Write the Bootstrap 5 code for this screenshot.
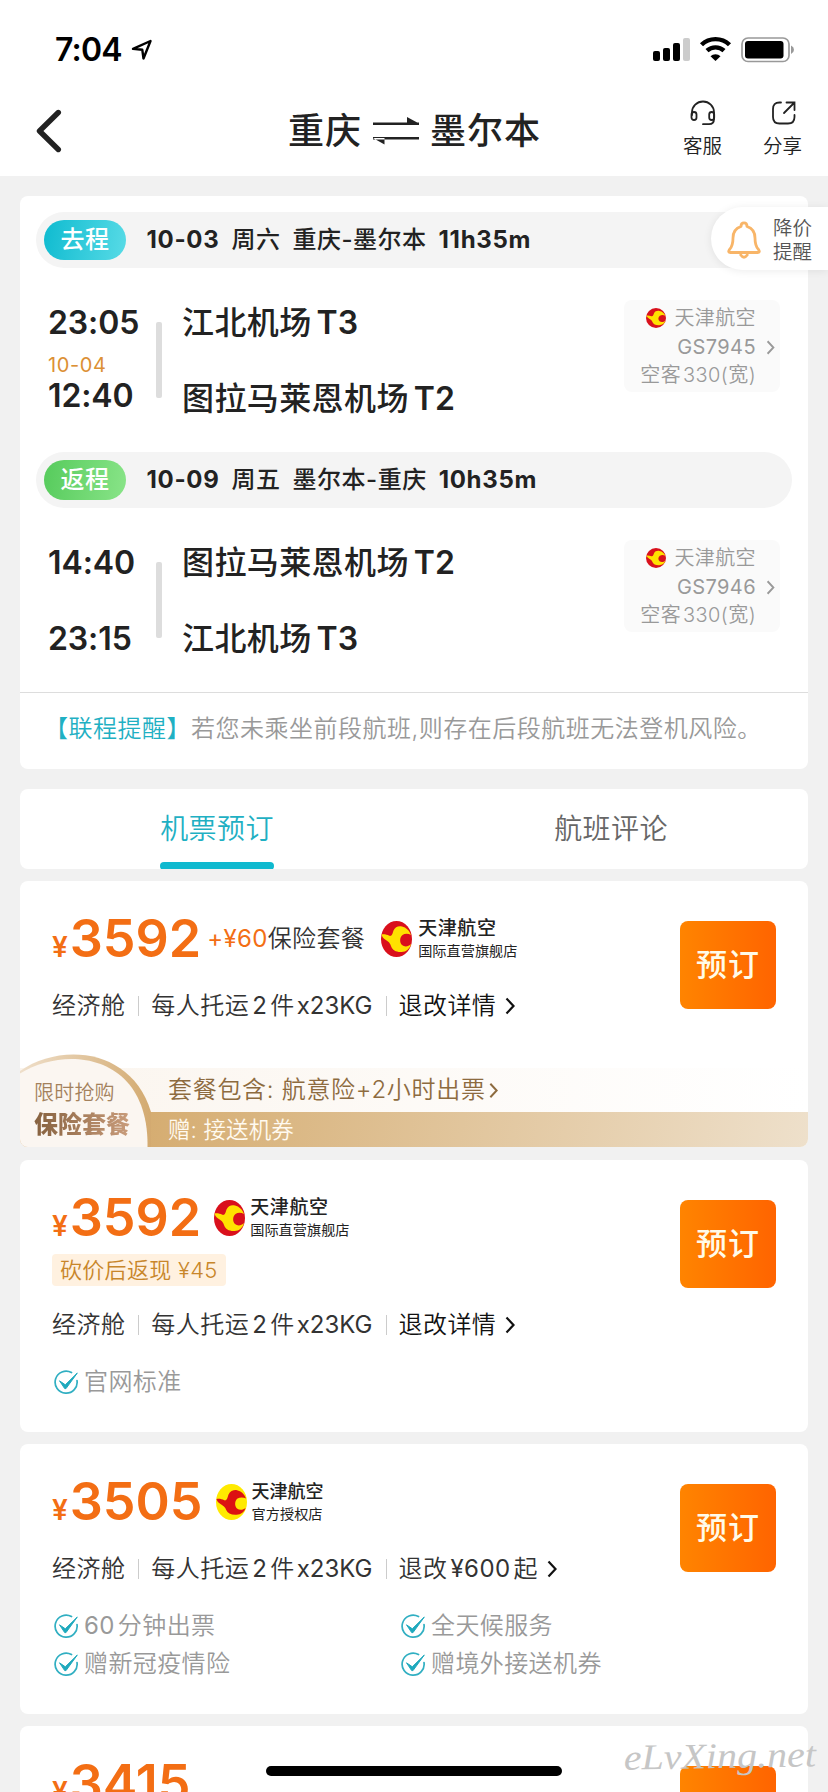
<!DOCTYPE html>
<html lang="zh-CN">
<head>
<meta charset="utf-8">
<meta name="viewport" content="width=device-width, initial-scale=1">
<title>重庆 ⇌ 墨尔本</title>
<link rel="stylesheet" href="https://cdn.jsdelivr.net/npm/bootstrap@5.3.0/dist/css/bootstrap.min.css">
<style>
body{font-family:Inter,"Noto Sans CJK SC",sans-serif;background:#f1f1f1;color:#222;width:828px;height:1792px;overflow:hidden;position:relative;font-size:24px;line-height:32px;white-space:nowrap;font-weight:350}
svg{display:block;flex:none}
.statusbar{height:98px;padding:25px 33px 0 55px}
.clock{font-size:32px;font-weight:600;letter-spacing:-.8px;line-height:50px;color:#000}
.navtop{height:78px;padding:0 26px 0 36px}
.ttl{font-size:36px;font-weight:500;letter-spacing:1px;line-height:50px}
.act{font-size:19.5px;line-height:24px}
.panel{background:#fff;border-radius:8px;margin:0 20px;overflow:hidden}
.triphead{height:56px;border-radius:28px;background:#f4f4f4;margin:0 16px;padding-left:8px;font-weight:700;letter-spacing:.7px}
.triphead>*+*+*{margin-left:12px}
.pill{width:82px;height:40px;border-radius:20px;color:#fff;font-weight:500;text-align:center;line-height:40px;letter-spacing:.4px;margin-right:20.5px}
.pill-go{background:linear-gradient(100deg,#0fbbd0,#58dbe6)}
.pill-back{background:linear-gradient(100deg,#56cb5c,#89e488)}
.triphead .zh{font-weight:500;letter-spacing:.5px}
.tripbody{height:184px;padding:33px 28px 0 28px}
.times{width:108px;font-size:32px;font-weight:600;line-height:44px;letter-spacing:-.1px}
.plus{font-size:20px;line-height:20px;color:#dc9035;font-weight:400;letter-spacing:.6px;margin:10px 0 1px}
.bar{width:6px;height:76px;background:#ddd;border-radius:2px;margin:21px 20px 0 0}
.ports{font-size:32px;font-weight:600;line-height:44px}
.ports span{font-weight:500;letter-spacing:.4px;margin-right:5px}
.gap32{margin-top:32px}
.plane{width:156px;height:92px;border-radius:8px;background:#fafafa;color:#999;font-size:20px;line-height:28.5px;padding:4px 24px 0 0;letter-spacing:.4px;margin-top:-1px;word-spacing:-4px}
.plane .chev{position:absolute;left:142px;top:40px}
.notice{border-top:1px solid #ddd;height:77px;padding-left:24px;line-height:72px;color:#999;letter-spacing:.5px}
.teal{color:#1fb0c3}
.tabs{height:80px;margin-top:20px;font-size:28px;color:#666;line-height:81px;text-align:center;letter-spacing:.4px}
.tabs .on{color:#1fb0c3}
.tabs .on::after{content:"";position:absolute;left:140px;bottom:0;width:114px;height:8px;border-radius:4px;background:#0fb9cf}
.offer{margin-top:12px;position:relative}
.offer .left{padding:32px 0 0 32px}
.price{height:52px;color:#f36e14;font-weight:600}
.yen{font-size:28px;line-height:52px;margin-right:2px}
.num{font-size:52px;line-height:52px;letter-spacing:0}
.extra{letter-spacing:.35px;font-weight:350}
.store{color:#222;font-size:19px;line-height:24px;font-weight:500;padding-top:4px;letter-spacing:.6px}
.store small{display:block;font-size:14.2px;line-height:20px;font-weight:400;letter-spacing:0}
.spec{height:32px;color:#333;letter-spacing:.45px}
.spec i{width:1px;height:20px;background:#ccc;margin:0 12px 0 13px}
.spec b{font-weight:400;margin:0 3px}
.spec .kg{letter-spacing:0;margin:0 0 0 2px}
.dark{color:#111}
.book{flex:none;width:96px;height:88px;border-radius:8px;border:0;background:linear-gradient(90deg,#ff8400,#ff6400);color:#fffbe8;font-size:31px;font-weight:500;padding:0;letter-spacing:1px;margin:40px 32px 0 0;line-height:86px}
.cash{height:32px;width:174px;background:#fff1e0;border-radius:4px;color:#c8862a;font-size:22px;line-height:32px;padding-left:8px;margin-top:10px;letter-spacing:.3px}
.tick{height:38px;color:#999;letter-spacing:.4px}
.tick svg{margin:0 5px 0 2px}
.promo{height:79px;position:relative}
.incl{height:44px;background:linear-gradient(90deg,#fbf5ee,#fff);color:#8d6b3f;padding-left:148px;line-height:44px;letter-spacing:.7px}
.gift{height:35px;background:linear-gradient(100deg,#d5ac70 15%,#eee0cb);color:#fffaf0;padding-left:148px;font-size:22.5px;line-height:35px;letter-spacing:.1px}
.arch{position:absolute;left:0;top:-15px}
.flash{position:absolute;left:14px;top:11px;font-size:20px;line-height:28px;color:#a3815c;letter-spacing:.2px}
.pack{position:absolute;left:14px;top:41px;font-size:24px;line-height:32px;font-weight:900;letter-spacing:0;background:linear-gradient(90deg,#86613f,#c99c7b);-webkit-background-clip:text;background-clip:text;color:transparent}
.float{position:absolute;right:0;top:207px;width:117px;height:63px;border-radius:32px 0 0 32px;background:#fff;box-shadow:0 1px 8px rgba(0,0,0,.08);font-size:19.5px;line-height:24px;color:#555;padding:3px 0 0 16px;gap:12px}
.home{position:absolute;left:266px;top:1766px;width:296px;height:10px;border-radius:5px;background:#000}
.mark-net{position:absolute;left:620px;top:1730px}
</style>
</head>
<body>
<svg width="0" height="0" class="position-absolute">
<defs>
<symbol id="logo" viewBox="0 0 31 36" preserveAspectRatio="none"><ellipse cx="15.500" cy="18" rx="15.500" ry="18" fill="#d9101c"/><path d="M.4 13.500 C3 13 6 13.500 8.300 14.800 C11 15.500 11.500 12.500 12.500 9.500 C14 5.500 18 4.500 21 5.500 C25 6.500 28.500 9.500 30 14 C27.500 12.500 24 12.200 21.500 14 C18.500 16.500 18.500 21.500 21 24 C23.500 26.200 27.500 25.700 30 23 C29 27.500 25 31 20.500 31 C15 31.300 11.500 29 10.200 25.500 C9.300 22 7 20.300 4.500 18.800 C2.500 17.500 1 15.500 .4 13.500Z" fill="#ffe100"/></symbol>
<symbol id="logo2" viewBox="0 0 31 36" preserveAspectRatio="none"><ellipse cx="15.500" cy="18" rx="15.500" ry="18" fill="#ffea00"/><path d="M.4 15 C3 14.500 6 15 8.300 16.300 C11 17 11.500 13.500 12.500 10.500 C14 7 18 5.700 21 6.200 C25 7 28.500 10 30 14.500 C27.500 13 24 13 21.500 14.500 C18.500 17 18.500 22 21 24.500 C23.500 26.500 27 26.200 29.500 24 C28.500 28 25 30.500 20.500 30.700 C15 31 11.500 29 10.200 26 C9.300 23 7 21.500 4.500 20 C2.500 19 1 17 .4 15Z" fill="#dc1212"/></symbol>
<symbol id="check" viewBox="0 0 25 25"><path d="M17.500 2.600 A11 11 0 1 0 23 10.500" fill="none" stroke="#31afc2" stroke-width="1.700" stroke-linecap="round"/><path d="M5.500 10.800 L11.300 14.800 L23.300 3 L12 18.600 L10.700 18.600Z" fill="#1ea9bd" stroke="#1ea9bd" stroke-width="1" stroke-linejoin="round"/></symbol>
<symbol id="gt" viewBox="0 0 10 18"><path d="M1.500 1.500 L8.500 9 L1.500 16.500" fill="none" stroke="currentColor" stroke-width="2.200"/></symbol>
</defs>
</svg>

<header class="bg-white">
  <div class="statusbar d-flex align-items-start">
    <span class="clock">7:04</span>
    <svg width="22" height="22" viewBox="0 0 22 22" style="margin:14px 0 0 9px"><path d="M2 9.800 L19.500 2 L12.500 19.500 L11.300 10.800 Z" fill="none" stroke="#000" stroke-width="2.400" stroke-linejoin="round"/></svg>
    <svg class="ms-auto" width="142" height="28" viewBox="0 0 142 28" style="margin-top:11px">
      <g><rect x="0" y="15" width="7" height="10" rx="2"/><rect x="10" y="12" width="7" height="13" rx="2"/><rect x="20" y="7" width="7" height="18" rx="2"/><rect x="30" y="2" width="7" height="23" rx="2" fill="#ccc"/></g>
      <g fill="none" stroke="#000" stroke-width="4.400"><path d="M48.500 8.800 A20 20 0 0 1 76.500 8.800"/><path d="M54 14.700 A12.500 12.500 0 0 1 71 14.700"/></g><path d="M57.500 20.300 A7 7 0 0 1 67.500 20.300 L62.500 25Z"/>
      <rect x="89" y="2" width="47" height="23.500" rx="6" fill="none" stroke="#999" stroke-width="1.700"/><rect x="92" y="5" width="38.500" height="17.500" rx="3"/><path d="M138 9.500 Q141 11 141 13.700 Q141 16.500 138 18Z" fill="#999"/>
    </svg>
  </div>
  <div class="navtop d-flex align-items-start">
    <svg width="26" height="44" viewBox="0 0 26 44" style="margin-top:11px"><path d="M22.300 3.500 L3.500 22 L22.300 40.500" fill="none" stroke="#222" stroke-width="5.400" stroke-linecap="round" stroke-linejoin="round"/></svg>
    <div class="ttl d-flex" style="margin:8px 0 0 226px"><span>重庆</span>
      <svg width="48" height="28" viewBox="0 0 48 28" style="margin:11px 10px 0 10px"><path d="M1 5.500 H47 V8 H1Z M35 0 L47 6.500 H35Z M1 20 H47 V22.500 H1Z M1 21 L12.500 27.500 V21Z" fill="#222"/></svg>
      <span>墨尔本</span></div>
    <div class="act ms-auto d-flex flex-column align-items-center" style="margin-right:41px">
      <svg width="26" height="26" viewBox="0 0 26 26" style="margin:2px 0 8px 1px"><g fill="none" stroke="#222" stroke-width="1.800" stroke-linecap="round"><path d="M2 15 V12.500 A11 11 0 0 1 24 12.500 V19 Q24 24 19 24.200 H13"/><rect x="1.500" y="12" width="5" height="8" rx="2.500"/><rect x="19.200" y="12" width="5" height="8" rx="2.500"/></g></svg>客服</div>
    <div class="act d-flex flex-column align-items-center">
      <svg width="26" height="26" viewBox="0 0 26 26" style="margin:2px 0 8px 3px"><path d="M10 2.500 H8.500 Q2 2.500 2 9 V17 Q2 23.500 8.500 23.500 H17 Q23.500 23.500 23.500 17 V15 M15.500 2.500 H23.500 V10 M23 3 L13 13" fill="none" stroke="#222" stroke-width="1.800" stroke-linecap="round"/></svg>分享</div>
  </div>
</header>

<section class="panel" style="margin-top:20px;padding-top:16px">
  <div class="triphead d-flex align-items-center"><span class="pill pill-go">去程</span><span class="ms-0">10-03</span><span class="zh">周六</span><span class="zh">重庆-墨尔本</span><span>11h35m</span></div>
  <div class="tripbody d-flex align-items-start">
    <div class="times"><div>23:05</div><div class="plus">10-04</div><div style="line-height:39px">12:40</div></div>
    <div class="bar"></div>
    <div class="ports"><div><span>江北机场</span>T3</div><div class="gap32"><span>图拉马莱恩机场</span>T2</div></div>
    <div class="plane ms-auto text-end position-relative"><div class="d-flex justify-content-end align-items-center"><svg width="20" height="20" style="margin-right:8px"><use href="#logo"/></svg>天津航空</div><div class="fw-normal">GS7945</div><div>空客 330(宽)</div><svg class="chev" width="9" height="15"><use href="#gt"/></svg></div>
  </div>
  <div class="triphead d-flex align-items-center"><span class="pill pill-back">返程</span><span class="ms-0">10-09</span><span class="zh">周五</span><span class="zh">墨尔本-重庆</span><span>10h35m</span></div>
  <div class="tripbody d-flex align-items-start">
    <div class="times"><div>14:40</div><div class="gap32">23:15</div></div>
    <div class="bar"></div>
    <div class="ports"><div><span>图拉马莱恩机场</span>T2</div><div class="gap32"><span>江北机场</span>T3</div></div>
    <div class="plane ms-auto text-end position-relative"><div class="d-flex justify-content-end align-items-center"><svg width="20" height="20" style="margin-right:8px"><use href="#logo"/></svg>天津航空</div><div class="fw-normal">GS7946</div><div>空客 330(宽)</div><svg class="chev" width="9" height="15"><use href="#gt"/></svg></div>
  </div>
  <div class="notice"><span class="teal">【联程提醒】</span>若您未乘坐前段航班,则存在后段航班无法登机风险。</div>
</section>

<nav class="panel tabs row g-0"><div class="col on position-relative">机票预订</div><div class="col">航班评论</div></nav>

<section class="panel offer">
  <div class="d-flex align-items-start" style="height:187px">
    <div class="left">
      <div class="price d-flex"><div><span class="yen">¥</span><span class="num">3592</span></div>
        <div class="extra" style="margin-left:6px;line-height:52px"><span class="fw-normal">+¥60</span><span style="color:#333">保险套餐</span></div>
        <svg width="31" height="36" style="margin:8px 6px 0 16px"><use href="#logo"/></svg>
        <div class="store">天津航空<small>国际直营旗舰店</small></div></div>
      <div class="spec d-flex align-items-center" style="margin-top:25px"><span>经济舱</span><i></i><span>每人托运<b>2</b>件<b class="kg">x23KG</b></span><i></i><span class="dark">退改详情</span><svg width="10" height="18" class="dark" style="margin-left:9px"><use href="#gt"/></svg></div>
    </div>
    <button class="book ms-auto">预订</button>
  </div>
  <div class="promo">
    <div class="incl d-flex align-items-center">套餐包含: 航意险+2小时出票<svg width="9" height="17" style="margin-left:3px"><use href="#gt"/></svg></div>
    <div class="gift">赠: 接送机券</div>
    <svg class="arch" width="136" height="94" viewBox="0 0 136 94"><defs><linearGradient id="gold"><stop offset="0" stop-color="#efdfca"/><stop offset="1" stop-color="#d3aa70"/></linearGradient></defs><path d="M0 18 C42 -11 112 -4 131 59 V94 H0Z" fill="url(#gold)"/><path d="M0 20.500 C48 -9 129 2 127.500 94 H0Z" fill="#fbf6f1"/></svg>
    <span class="flash">限时抢购</span><span class="pack">保险套餐</span>
  </div>
</section>

<section class="panel offer d-flex align-items-start" style="height:272px;margin-top:13px">
  <div class="left">
    <div class="price d-flex"><div><span class="yen">¥</span><span class="num">3592</span></div>
      <svg width="31" height="36" style="margin:8px 5px 0 13px"><use href="#logo"/></svg>
      <div class="store">天津航空<small>国际直营旗舰店</small></div></div>
    <div class="cash">砍价后返现 ¥45</div>
    <div class="spec d-flex align-items-center" style="margin-top:23px"><span>经济舱</span><i></i><span>每人托运<b>2</b>件<b class="kg">x23KG</b></span><i></i><span class="dark">退改详情</span><svg width="10" height="18" class="dark" style="margin-left:9px"><use href="#gt"/></svg></div>
    <div class="tick d-flex align-items-center" style="margin-top:22px"><svg width="25" height="25"><use href="#check"/></svg>官网标准</div>
  </div>
  <button class="book ms-auto">预订</button>
</section>

<section class="panel offer d-flex align-items-start" style="height:270px">
  <div class="left flex-grow-1">
    <div class="price d-flex"><div><span class="yen">¥</span><span class="num">3505</span></div>
      <svg width="31" height="36" style="margin:8px 5px 0 13px"><use href="#logo2"/></svg>
      <div class="store" style="font-size:18px;letter-spacing:0">天津航空<small>官方授权店</small></div></div>
    <div class="spec d-flex align-items-center" style="margin-top:25px"><span>经济舱</span><i></i><span>每人托运<b>2</b>件<b class="kg">x23KG</b></span><i></i><span>退改<b>¥600</b>起</span><svg width="10" height="18" class="dark" style="margin-left:9px"><use href="#gt"/></svg></div>
    <div class="row g-0" style="margin-top:22px">
      <div class="tick d-flex align-items-center" style="width:347px"><svg width="25" height="25"><use href="#check"/></svg><span><span class="fw-normal" style="margin-right:3px">60</span>分钟出票</span></div><div class="tick col d-flex align-items-center"><svg width="25" height="25"><use href="#check"/></svg>全天候服务</div>
      <div class="w-100"></div>
      <div class="tick d-flex align-items-center" style="width:347px"><svg width="25" height="25"><use href="#check"/></svg>赠新冠疫情险</div><div class="tick col d-flex align-items-center"><svg width="25" height="25"><use href="#check"/></svg>赠境外接送机券</div>
    </div>
  </div>
  <button class="book">预订</button>
</section>

<section class="panel offer d-flex align-items-start" style="height:66px;border-bottom-left-radius:0;border-bottom-right-radius:0">
  <div class="left"><div class="price"><span class="yen">¥</span><span class="num">3415</span></div></div>
  <div class="book ms-auto"></div>
</section>

<div class="float d-flex align-items-center">
  <svg width="34" height="38" viewBox="0 0 34 38"><g fill="none" stroke="#f8b568" stroke-width="2.800" stroke-linejoin="round" stroke-linecap="round"><path d="M14 5.500 Q14 1.800 17 1.800 Q20 1.800 20 5.500 Q28 8 28 17 Q28 25 31.500 28.500 Q33.500 31.500 30.500 31.500 H3.500 Q.5 31.500 2.500 28.500 Q6 25 6 17 Q6 8 14 5.500Z"/><path d="M13.800 34 Q17 38.500 20.200 34"/></g></svg>
  <div>降价<br>提醒</div>
</div>
<div class="home"></div>
<svg class="mark-net" width="208" height="60"><text x="4" y="38" textLength="192" lengthAdjust="spacingAndGlyphs" font-family="'Liberation Serif',serif" font-style="italic" font-size="36" fill="#c6c6c6" transform="rotate(-1 100 38)">eLvXing.net</text></svg>
<script src="https://cdn.jsdelivr.net/npm/bootstrap@5.3.0/dist/js/bootstrap.bundle.min.js"></script>
</body>
</html>
